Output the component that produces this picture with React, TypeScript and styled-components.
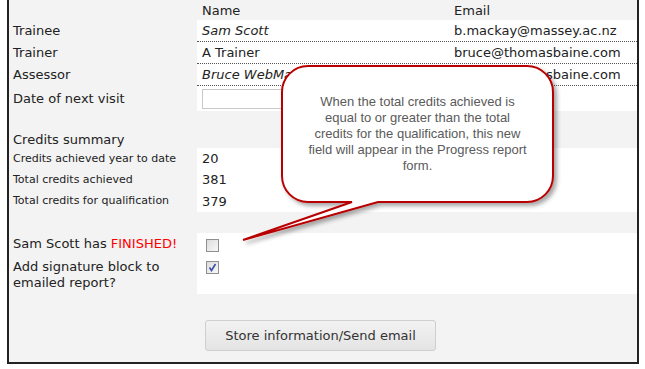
import React from "react";
import styled, { createGlobalStyle } from "styled-components";

const Global = createGlobalStyle`
  html, body { margin: 0; padding: 0; background: #fff; }
  body { font-family: Verdana, "DejaVu Sans", sans-serif; color: #222; }
`;

const Panel = styled.div`
  position: relative;
  margin-left: 7px;
  width: 628px;
  border: 2px solid #222;
  border-top: none;
  background: #f3f3f3;
  padding-bottom: 11px;
`;

const Row = styled.div<{ $h: number }>`
  display: grid;
  grid-template-columns: 188px 1fr;
  height: ${(p) => p.$h}px;
`;

const Label = styled.div<{ $small?: boolean; $align?: string; $pt?: number }>`
  padding-left: 4px;
  padding-top: ${(p) => p.$pt || 0}px;
  font-size: ${(p) => (p.$small ? 11 : 13)}px;
  display: flex;
  align-items: ${(p) => p.$align || "center"};
  line-height: 16px;
`;

const Value = styled.div<{ $white?: boolean; $dotted?: boolean }>`
  background: ${(p) => (p.$white ? "#fff" : "transparent")};
  border-bottom: ${(p) => (p.$dotted ? "1px dotted #555" : "none")};
  display: grid;
  grid-template-columns: 252px 1fr;
  align-items: center;
  padding-left: 5px;
  font-size: 13px;
`;

const Cell = styled.span<{ $italic?: boolean }>`
  font-style: ${(p) => (p.$italic ? "italic" : "normal")};
  white-space: nowrap;
`;

const DateInput = styled.div`
  width: 150px;
  height: 18px;
  border: 1px solid #c8c8c8;
  background: #fff;
`;

const Red = styled.span`
  color: #f00;
`;

const CheckCell = styled.div`
  background: #fff;
  padding: 6px 0 0 9px;
`;

const Box = styled.span`
  display: flex;
  align-items: center;
  justify-content: center;
  width: 11px;
  height: 11px;
  border: 1px solid #8e8f8f;
  background: linear-gradient(135deg, #dcdcdc, #f8f8f8);
`;

const ButtonRow = styled.div`
  padding: 26px 0 0 196px;
`;

const Button = styled.div`
  width: 229px;
  height: 29px;
  border: 1px solid #cfcfcf;
  border-radius: 3px;
  background: linear-gradient(#f2f2f2, #e4e4e4);
  display: flex;
  align-items: center;
  justify-content: center;
  font-size: 13px;
  color: #333;
`;

const Bubble = styled.svg`
  position: absolute;
  left: 221px;
  top: 55px;
  overflow: visible;
`;

const BubbleText = styled.div`
  position: absolute;
  left: 273px;
  top: 94px;
  width: 271px;
  text-align: center;
  font-family: "Liberation Sans", Arial, sans-serif;
  font-size: 13px;
  line-height: 16px;
  color: #5a5a5a;
`;

function Check({ checked }: { checked?: boolean }) {
  return (
    <Box>
      {checked && (
        <svg width="9" height="9" viewBox="0 0 9 9">
          <path d="M1.5 4.5 L3.5 7.5 L7.5 1" stroke="#3b4fa8" strokeWidth="1.6" fill="none" />
        </svg>
      )}
    </Box>
  );
}

export default function App() {
  return (
    <>
      <Global />
      <Panel>
        <Row $h={20}>
          <Label />
          <Value>
            <Cell>Name</Cell>
            <Cell>Email</Cell>
          </Value>
        </Row>
        <Row $h={22}>
          <Label>Trainee</Label>
          <Value $white $dotted>
            <Cell $italic>Sam Scott</Cell>
            <Cell>b.mackay@massey.ac.nz</Cell>
          </Value>
        </Row>
        <Row $h={22}>
          <Label>Trainer</Label>
          <Value $white $dotted>
            <Cell>A Trainer</Cell>
            <Cell>bruce@thomasbaine.com</Cell>
          </Value>
        </Row>
        <Row $h={22}>
          <Label>Assessor</Label>
          <Value $white $dotted>
            <Cell $italic>Bruce WebMaster</Cell>
            <Cell>bruce@thomasbaine.com</Cell>
          </Value>
        </Row>
        <Row $h={25}>
          <Label>Date of next visit</Label>
          <Value $white>
            <DateInput />
          </Value>
        </Row>
        <Row $h={37}>
          <Label $align="flex-end">Credits summary</Label>
          <Value />
        </Row>
        <Row $h={21}>
          <Label $small>Credits achieved year to date</Label>
          <Value $white>20</Value>
        </Row>
        <Row $h={21}>
          <Label $small>Total credits achieved</Label>
          <Value $white>381</Value>
        </Row>
        <Row $h={22}>
          <Label $small>Total credits for qualification</Label>
          <Value $white>379</Value>
        </Row>
        <Row $h={21}>
          <Label />
          <Value />
        </Row>
        <Row $h={22}>
          <Label>
            <span>
              Sam Scott has <Red>FINISHED!</Red>
            </span>
          </Label>
          <CheckCell>
            <Check />
          </CheckCell>
        </Row>
        <Row $h={39}>
          <Label $align="flex-start" $pt={4}>
            <span>
              Add signature block to
              <br />
              emailed report?
            </span>
          </Label>
          <CheckCell>
            <Check checked />
          </CheckCell>
        </Row>
        <ButtonRow>
          <Button>Store information/Send email</Button>
        </ButtonRow>
        <Bubble width="345" height="200" viewBox="0 0 345 200">
          <defs>
            <filter id="sh" x="-20%" y="-20%" width="140%" height="140%">
              <feDropShadow dx="3" dy="3" stdDeviation="2" floodColor="#000" floodOpacity="0.35" />
            </filter>
          </defs>
          <path
            d="M78 11 H297 A26 26 0 0 1 323 37 V121 A26 26 0 0 1 297 147 H148 L13 185 L122 147 H78 A26 26 0 0 1 52 121 V37 A26 26 0 0 1 78 11 Z"
            fill="#fff"
            stroke="#b80000"
            strokeWidth="2"
            filter="url(#sh)"
          />
        </Bubble>
        <BubbleText>
          When the total credits achieved is
          <br />
          equal to or greater than the total
          <br />
          credits for the qualification, this new
          <br />
          field will appear in the Progress report
          <br />
          form.
        </BubbleText>
      </Panel>
    </>
  );
}
